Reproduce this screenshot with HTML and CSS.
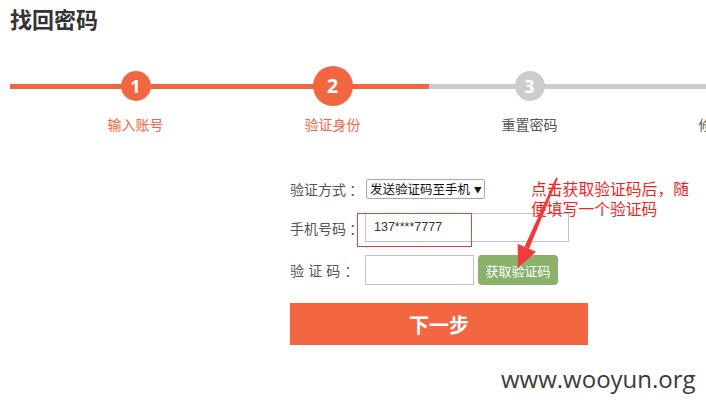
FILE: index.html
```html
<!DOCTYPE html>
<html lang="zh-CN">
<head>
<meta charset="utf-8">
<title>找回密码</title>
<link rel="stylesheet" href="styles.css">
</head>
<body>
<div class="page">
  <h1 class="title">找回密码</h1>

  <div class="progress">
    <div class="bar"></div>
    <ol class="steps">
      <li class="step done"><span class="dot">1</span><span class="label">输入账号</span></li>
      <li class="step current"><span class="dot big">2</span><span class="label">验证身份</span></li>
      <li class="step"><span class="dot">3</span><span class="label">重置密码</span></li>
      <li class="step"><span class="dot">4</span><span class="label">修改成功</span></li>
    </ol>
  </div>

  <form class="form">
    <div class="row row-method">
      <span class="field-label">验证方式 ：</span>
      <div class="select">发送验证码至手机 <span class="caret">▼</span></div>
    </div>
    <div class="row row-phone">
      <span class="field-label">手机号码 ：</span>
      <div class="input phone">137****7777</div>
    </div>
    <div class="row row-code">
      <span class="field-label spaced">验 证 码 ：</span>
      <div class="input code"></div>
      <button type="button" class="get-code">获取验证码</button>
    </div>
    <button type="button" class="next">下一步</button>
  </form>

  <div class="mark-box"></div>
  <p class="note">点击获取验证码后，随<br>便填写一个验证码</p>
  <svg class="arrow" width="706" height="411" viewBox="0 0 706 411">
    <polygon points="556.1,177.6 557.9,178.4 529.1,248.8 524.5,246.8" fill="#f23a3a"/>
    <polygon points="517.6,243.8 536,251.8 518,268" fill="#f23a3a"/>
  </svg>
  <div class="watermark">www.wooyun.org</div>
</div>
</body>
</html>
```
FILE: styles.css
```css
html, body {
  margin: 0;
  padding: 0;
  overflow: hidden;
  background: #fff;
}
body {
  font-family: "Noto Sans CJK SC", "Noto Sans", sans-serif;
  color: #333;
  width: 706px;
  height: 411px;
}
.page {
  position: relative;
  width: 706px;
  height: 411px;
}
.title {
  margin: 0;
  padding: 4px 0 0 10px;
  font-size: 22px;
  line-height: 29px;
  font-weight: 700;
  color: #333;
}

.progress {
  display: grid;
  margin-top: 33px;
}
.bar {
  grid-area: 1 / 1;
  align-self: start;
  margin: 18px 0 0 10px;
  height: 5px;
  width: 900px;
  background: linear-gradient(to right, #f26641 0, #f26641 419px, #cccccc 419px);
}
.steps {
  grid-area: 1 / 1;
  list-style: none;
  margin: 0;
  padding: 0 0 0 37px;
  display: flex;
}
.step {
  flex: 0 0 197px;
  display: flex;
  flex-direction: column;
  align-items: center;
}
.dot {
  width: 30px;
  height: 30px;
  margin: 5px 0;
  border-radius: 50%;
  background: #cccccc;
  color: #fff;
  font-family: "Open Sans", "Noto Sans", sans-serif;
  font-weight: 700;
  font-size: 18px;
  line-height: 30px;
  text-align: center;
}
.dot.big {
  width: 40px;
  height: 40px;
  margin: 0;
  line-height: 40px;
  font-size: 20px;
}
.step.done .dot, .step.current .dot {
  background: #f26641;
}
.label {
  margin-top: 8px;
  font-size: 14px;
  line-height: 20px;
  color: #555;
}
.step.done .label, .step.current .label {
  color: #f26641;
}

.form {
  margin: 45px 0 0 290px;
  display: flex;
  flex-direction: column;
  align-items: flex-start;
}
.row {
  display: flex;
  align-items: center;
}
.field-label {
  width: 75px;
  font-size: 14px;
  color: #555;
  white-space: pre;
}
.field-label.spaced {
  word-spacing: 1px;
}
.select {
  height: 20px;
  width: 119px;
  box-sizing: border-box;
  margin-left: 1px;
  border: 1px solid #a9a9a9;
  border-radius: 2px;
  font-size: 12.5px;
  line-height: 18px;
  padding-left: 3px;
  color: #111;
  white-space: nowrap;
  overflow: hidden;
}
.caret {
  font-size: 8px;
  margin-left: 1px;
  vertical-align: 1px;
}
.row-phone {
  margin-top: 14px;
}
.input {
  box-sizing: border-box;
  border: 1px solid #c3c3c3;
  background: #fff;
}
.phone {
  width: 204px;
  height: 29px;
  padding-left: 8px;
  font-family: "Liberation Sans", sans-serif;
  font-size: 12.5px;
  line-height: 27px;
  color: #333;
}
.row-code {
  margin-top: 13px;
}
.code {
  width: 109px;
  height: 30px;
}
.get-code {
  margin-left: 4px;
  width: 80px;
  height: 30px;
  border: none;
  border-radius: 4px;
  background: #8ab26d;
  color: #fff;
  font-family: "Noto Sans CJK SC", sans-serif;
  font-size: 13px;
  padding: 0;
}
.next {
  margin-top: 18px;
  width: 298px;
  height: 42px;
  border: none;
  background: #f26641;
  color: #fff;
  font-family: "Noto Sans CJK SC", sans-serif;
  font-weight: 700;
  font-size: 20px;
  padding: 0;
}

.mark-box {
  position: absolute;
  left: 357px;
  top: 213px;
  width: 113px;
  height: 32px;
  border: 1px solid #e2413c;
}
.note {
  position: absolute;
  left: 531px;
  top: 179px;
  margin: 0;
  font-size: 15.8px;
  line-height: 20px;
  color: #f21f1f;
  white-space: nowrap;
}
.arrow {
  position: absolute;
  left: 0;
  top: 0;
  pointer-events: none;
}
.watermark {
  position: absolute;
  left: 501px;
  top: 363px;
  font-family: "Open Sans", "Noto Sans", sans-serif;
  font-size: 24px;
  line-height: 32px;
  color: #3a3a3a;
}
```
